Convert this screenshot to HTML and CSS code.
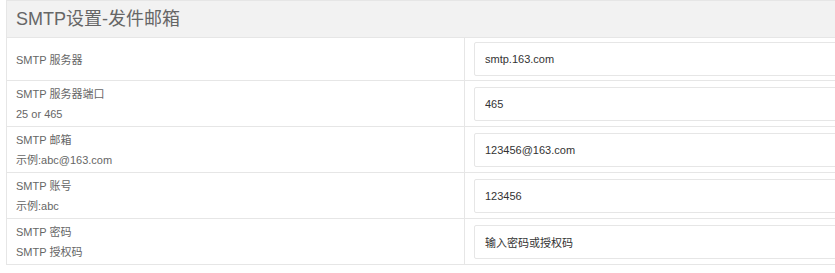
FILE: index.html
```html
<!DOCTYPE html>
<html lang="zh-CN">
<head>
  <meta charset="UTF-8">
  <title>SMTP设置</title>
  <link rel="stylesheet" href="styles.css">
</head>
<body>

<div class="panel">
  <div class="panel-title">SMTP设置-发件邮箱</div>

  <div class="row">
    <div class="label">SMTP 服务器</div>
    <div class="field"><input class="input" type="text" value="smtp.163.com"></div>
  </div>

  <div class="row">
    <div class="label">SMTP 服务器端口<br>25 or 465</div>
    <div class="field"><input class="input" type="text" value="465"></div>
  </div>

  <div class="row">
    <div class="label">SMTP 邮箱<br>示例:abc@163.com</div>
    <div class="field"><input class="input" type="text" value="123456@163.com"></div>
  </div>

  <div class="row">
    <div class="label">SMTP 账号<br>示例:abc</div>
    <div class="field"><input class="input" type="text" value="123456"></div>
  </div>

  <div class="row">
    <div class="label">SMTP 密码<br>SMTP 授权码</div>
    <div class="field"><input class="input" type="text" value="输入密码或授权码"></div>
  </div>
</div>

</body>
</html>
```

FILE: styles.css
```css
html, body {
  overflow: hidden;
}
body {
  margin: 0;
  background: #fff;
  font-family: "Liberation Sans", "Noto Sans CJK SC", sans-serif;
  font-size: 11px;
  color: #666;
}
.panel {
  margin-left: 6px;
  width: 960px;
  border: 1px solid #e6e6e6;
}
.panel-title {
  height: 36px;
  line-height: 36px;
  padding-left: 9px;
  font-size: 18px;
  color: #666;
  background: #f2f2f2;
  border-bottom: 1px solid #e6e6e6;
}
.row {
  display: flex;
  border-bottom: 1px solid #e6e6e6;
}
.row:last-child {
  border-bottom: none;
}
.label {
  box-sizing: border-box;
  width: 458px;
  flex-shrink: 0;
  padding: 3px 9px 2px;
  line-height: 20px;
  border-right: 1px solid #e6e6e6;
  display: flex;
  flex-direction: column;
  justify-content: center;
}
.field {
  flex: 1;
  padding: 4px 9px;
  display: flex;
  align-items: center;
}
.input {
  box-sizing: border-box;
  width: 100%;
  height: 34px;
  padding: 0 10px;
  border: 1px solid #e6e6e6;
  border-radius: 2px;
  font-family: inherit;
  font-size: 11px;
  color: #333;
  background: #fff;
  outline: none;
}
```
